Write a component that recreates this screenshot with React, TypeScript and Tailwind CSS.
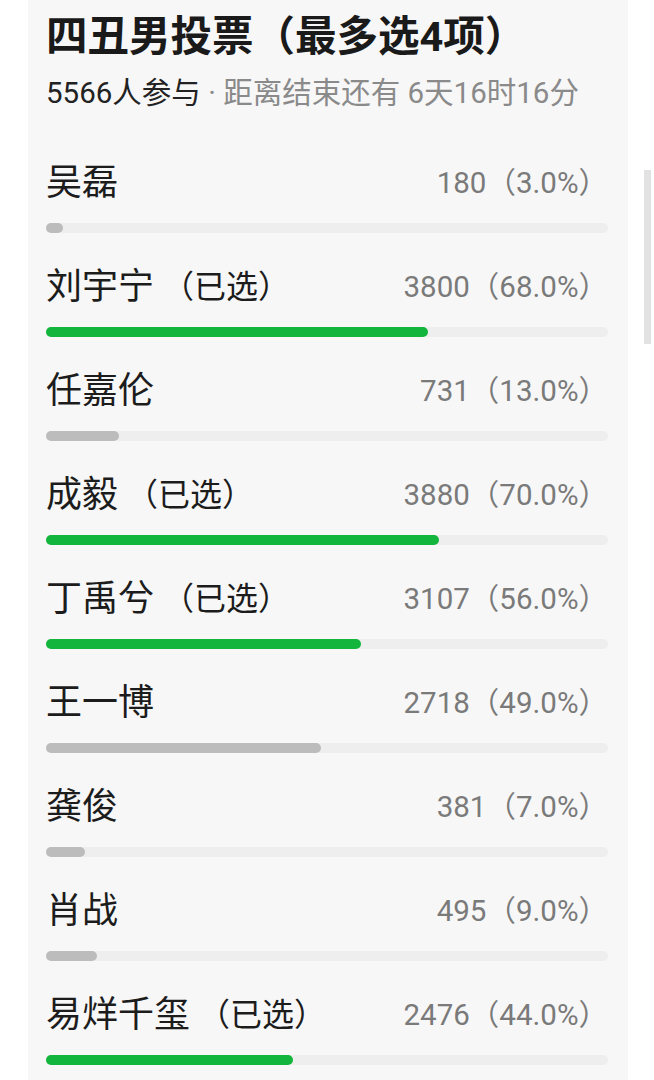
const options = [
  { name: '吴磊', picked: false, count: 180, pct: 3.0 },
  { name: '刘宇宁', picked: true, count: 3800, pct: 68.0 },
  { name: '任嘉伦', picked: false, count: 731, pct: 13.0 },
  { name: '成毅', picked: true, count: 3880, pct: 70.0 },
  { name: '丁禹兮', picked: true, count: 3107, pct: 56.0 },
  { name: '王一博', picked: false, count: 2718, pct: 49.0 },
  { name: '龚俊', picked: false, count: 381, pct: 7.0 },
  { name: '肖战', picked: false, count: 495, pct: 9.0 },
  { name: '易烊千玺', picked: true, count: 2476, pct: 44.0 },
];

function OptionRow({ name, picked, count, pct }: (typeof options)[number]) {
  return (
    <div className="h-[104px] shrink-0">
      <div className="flex h-[40px] items-center justify-between">
        <span className="flex items-center text-[36px] leading-[40px] text-[#1c1c1c]">
          {name}
          {picked && <span className="ml-[8px] text-[32px]">（已选）</span>}
        </span>
        <span className="text-[29.5px] leading-[40px] text-[#7a7a7a]">
          {count}（{pct.toFixed(1)}%）
        </span>
      </div>
      <div className="mt-[20px] h-[10px] w-full rounded-full bg-[#eeeeee]">
        <div
          className={`h-full rounded-full ${picked ? 'bg-[#13b53d]' : 'bg-[#bcbcbc]'}`}
          style={{ width: `${pct}%` }}
        />
      </div>
    </div>
  );
}

export default function App() {
  return (
    <div
      className="relative h-[1080px] w-[654px] overflow-hidden bg-white"
      style={{ fontFamily: 'Roboto, "Noto Sans CJK SC", sans-serif' }}
    >
      <div className="ml-[28px] flex h-full w-[600px] flex-col bg-[#f7f7f7] pl-[18px] pr-[20px] pt-[13px]">
        <h1 className="h-[48px] text-[41.5px] font-bold leading-[48px] text-[#1a1a1a]">
          四丑男投票（最多选4项）
        </h1>
        <p className="mt-[14px] h-[36px] text-[29.5px] leading-[36px] text-[#222222]">
          5566人参与
          <span className="text-[#8a8a8a]"> · 距离结束还有 6天16时16分</span>
        </p>
        <div className="mt-[52px] flex flex-col">
          {options.map(o => (
            <OptionRow key={o.name} {...o} />
          ))}
        </div>
      </div>
      {/* scrollbar thumb */}
      <div className="absolute left-[644px] top-[170px] h-[174px] w-[7px] bg-[#e2e2e2]" />
    </div>
  );
}
